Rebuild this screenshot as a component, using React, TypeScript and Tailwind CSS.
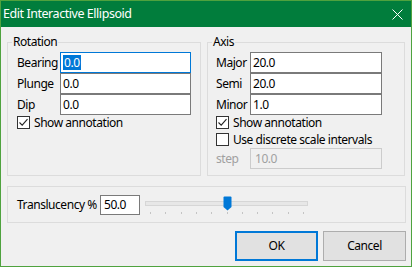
import React from 'react';

const Check: React.FC<{ checked?: boolean }> = ({ checked }) => (
  <div className="w-[13px] h-[13px] border border-[#333333] bg-white flex items-center justify-center shrink-0">
    {checked && (
      <svg width="11" height="11" viewBox="0 0 11 11">
        <path d="M1.5 5.5 L4.2 8.2 L9.5 2.2" fill="none" stroke="#222" strokeWidth="1.1" />
      </svg>
    )}
  </div>
);

const CheckRow: React.FC<{ checked?: boolean; label: string; className?: string }> = ({ checked, label, className }) => (
  <div className={`flex items-center gap-[4px] h-[13px] ${className ?? ''}`}>
    <Check checked={checked} />
    <span className="leading-[13px]">{label}</span>
  </div>
);

const Field: React.FC<{ value: React.ReactNode; focused?: boolean; width: string }> = ({ value, focused, width }) => (
  <div
    className={`h-[21px] ${width} bg-white border flex items-center px-[2px] ${
      focused ? 'border-[#0078d7]' : 'border-[#7a7a7a]'
    }`}
  >
    {value}
  </div>
);

const ticks = Array.from({ length: 11 }, (_, i) => 5 + i * 15.3);

export default function App() {
  return (
    <div className="w-[412px] h-[267px] border border-[#4fa23e] bg-[#f0f0f0] flex flex-col font-['Noto_Sans','Open_Sans',sans-serif] text-[12px] tracking-[-0.45px] text-black">
      <div className="h-[26px] bg-[#017d3c] text-white flex items-center justify-between pl-[2px] pr-[8px]">
        <span className="text-[12.5px]">Edit Interactive Ellipsoid</span>
        <svg width="11" height="11" viewBox="0 0 11 11">
          <path d="M0.5 0.5 L10.5 10.5 M10.5 0.5 L0.5 10.5" stroke="#fff" strokeWidth="1" />
        </svg>
      </div>

      <div className="flex-1 flex flex-col pl-[6px] pr-[5px] pt-[7px]">
        <div className="flex gap-[6px]">
          <fieldset className="w-[194px] border border-[#dcdcdc] p-0">
            <legend className="ml-[4px] px-[1px] leading-[16px]">Rotation</legend>
            <div className="pl-[9px] pt-[2px] flex flex-col">
              <div className="grid grid-cols-[43px_131px]">
                <span className="self-center">Bearing</span>
                <Field
                  width="w-[131px]"
                  focused
                  value={<span className="bg-[#0078d7] text-white px-[1px] leading-[15px]">0.0</span>}
                />
                <span className="self-center">Plunge</span>
                <Field width="w-[131px]" value="0.0" />
                <span className="self-center">Dip</span>
                <Field width="w-[131px]" value="0.0" />
              </div>
              <CheckRow checked label="Show annotation" className="mt-[1px]" />
            </div>
          </fieldset>

          <fieldset className="w-[198px] border border-[#dcdcdc] p-0">
            <legend className="ml-[4px] px-[1px] leading-[16px]">Axis</legend>
            <div className="pl-[8px] pt-[2px] pb-[6px] flex flex-col">
              <div className="grid grid-cols-[34px_132px]">
                <span className="self-center">Major</span>
                <Field width="w-[132px]" value="20.0" />
                <span className="self-center">Semi</span>
                <Field width="w-[132px]" value="20.0" />
                <span className="self-center">Minor</span>
                <Field width="w-[132px]" value="1.0" />
              </div>
              <CheckRow checked label="Show annotation" className="mt-[1px]" />
              <CheckRow label="Use discrete scale intervals" className="mt-[4px]" />
              <div className="grid grid-cols-[34px_132px] mt-[2px] text-[#a0a0a0]">
                <span className="self-center">step</span>
                <div className="h-[21px] w-[132px] border border-[#cccccc] bg-[#f0f0f0] flex items-center px-[4px]">
                  10.0
                </div>
              </div>
            </div>
          </fieldset>
        </div>

        <div className="mt-[10px] h-[37px] border border-[#dcdcdc] flex items-center pl-[9px]">
          <span className="w-[83px] shrink-0">Translucency %</span>
          <div className="h-[20px] w-[40px] bg-white border border-[#7a7a7a] flex items-center px-[3px]">
            50.0
          </div>
          <div className="relative ml-[5px] w-[163px] h-[20px] mt-[1px]">
            <div className="absolute left-0 right-0 top-[6px] h-[5px] bg-[#e7e7e7] border border-[#d6d6d6]" />
            <svg className="absolute left-[78px] top-[1px]" width="9" height="15" viewBox="0 0 9 15">
              <path d="M0.5 1.5 Q0.5 0.5 1.5 0.5 L7.5 0.5 Q8.5 0.5 8.5 1.5 L8.5 11 L4.5 14.5 L0.5 11 Z" fill="#0078d7" />
            </svg>
            {ticks.map((x, i) => (
              <div key={i} className="absolute top-[17px] w-px h-[2px] bg-[#c4c4c4]" style={{ left: x }} />
            ))}
          </div>
        </div>

        <div className="mt-[8px] flex justify-end gap-[5px]">
          <button className="w-[83px] h-[30px] bg-[#e1e1e1] border border-[#0078d7] outline outline-1 outline-[#0078d7] -outline-offset-2">
            OK
          </button>
          <button className="w-[83px] h-[30px] bg-[#e1e1e1] border border-[#adadad]">Cancel</button>
        </div>
      </div>
    </div>
  );
}
